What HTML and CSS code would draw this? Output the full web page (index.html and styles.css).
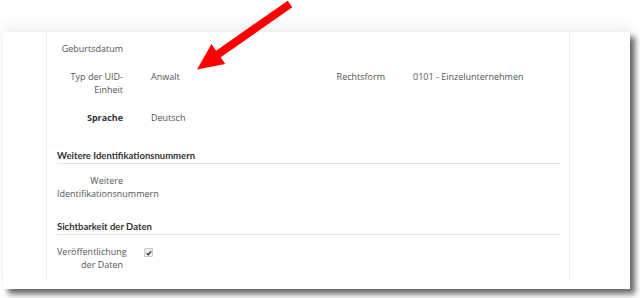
FILE: index.html
```html
<!DOCTYPE html>
<html lang="de">
<head>
    <meta charset="UTF-8">
    <title>Stammdaten</title>
    <link rel="stylesheet" href="styles.css">
</head>
<body>
<div class="page">
    <div class="panel">
        <div class="gutter gutter-left"></div>
        <div class="content">
            <div class="row">
                <div class="label">Geburtsdatum</div>
                <div class="value"></div>
            </div>
            <div class="row">
                <div class="label">Typ der UID-Einheit</div>
                <div class="value">Anwalt</div>
                <div class="label">Rechtsform</div>
                <div class="value">0101 - Einzelunternehmen</div>
            </div>
            <div class="row">
                <div class="label strong">Sprache</div>
                <div class="value">Deutsch</div>
            </div>

            <h2 class="section-title first">Weitere Identifikationsnummern</h2>
            <div class="row">
                <div class="label">Weitere Identifikationsnummern</div>
                <div class="value"></div>
            </div>

            <h2 class="section-title">Sichtbarkeit der Daten</h2>
            <div class="row">
                <div class="label">Veröffentlichung der Daten</div>
                <div class="value">
                    <span class="checkbox">
                        <svg width="6" height="6" viewBox="0 0 6 6"><path d="M0.8 3.2 L2.3 4.7 L5.2 1.2" fill="none" stroke="#333" stroke-width="1.3"/></svg>
                    </span>
                </div>
            </div>
        </div>
        <div class="gutter gutter-right"></div>
    </div>
</div>

<svg class="arrow" width="300" height="75" viewBox="0 0 300 75">
    <polygon points="292.3,7.3 220.7,57.3 225.3,63.9 197,69.5 211.5,44.1 216.1,50.7 287.7,0.7" fill="#ff0000"/>
</svg>
</body>
</html>
```

FILE: styles.css
```css
body {
    margin: 0;
    background: #fff;
    font-family: "Open Sans", "Liberation Sans", sans-serif;
    font-size: 9px;
    color: #555;
}

.page {
    padding: 32px 10px 0 3px;
    height: 298px;
    box-sizing: border-box;
    overflow: hidden;
}

.panel {
    display: flex;
    width: 627px;
    height: 257px;
    padding-bottom: 7px;
    box-sizing: border-box;
    background: #fff;
    box-shadow: 0 -6px 12px rgba(0, 0, 0, 0.06), 5px 5px 6px rgba(0, 0, 0, 0.6);
}

.gutter-left {
    width: 43px;
    border-right: 1px solid #f0f0f0;
}

.gutter-right {
    flex: 1;
    border-left: 1px solid #f0f0f0;
}

.content {
    width: 503px;
    padding: 9.5px 9px 0 10px;
}

.row {
    display: grid;
    grid-template-columns: 66px 140px 66px 1fr;
    column-gap: 28px;
    line-height: 13px;
    margin-bottom: 15px;
}

.label {
    text-align: right;
}

.strong {
    font-weight: bold;
    color: #333;
}

.section-title {
    margin: 20px 0 10px;
    padding-bottom: 1px;
    font-family: Lato, "Open Sans", sans-serif;
    font-size: 9.5px;
    line-height: 13px;
    font-weight: bold;
    color: #333;
    border-bottom: 1px solid #e2e2e2;
}

.section-title.first {
    margin-top: 25px;
}

.checkbox {
    display: inline-flex;
    align-items: center;
    justify-content: center;
    width: 7px;
    height: 7px;
    margin-left: -7px;
    vertical-align: -1px;
    border: 1px solid #ccc;
    border-radius: 1px;
    background: #eee;
}

.arrow {
    position: absolute;
    left: 0;
    top: 0;
}
```
